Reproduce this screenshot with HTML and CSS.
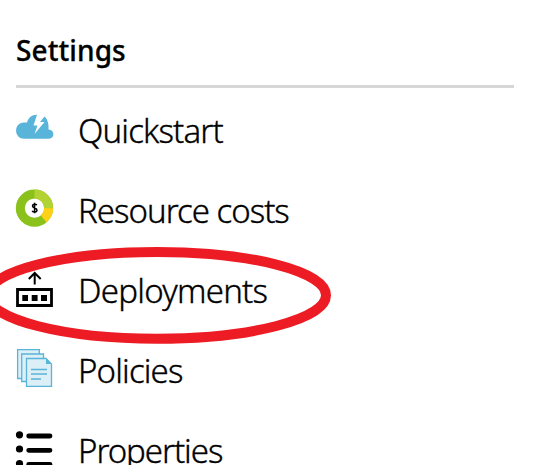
FILE: index.html
```html
<!DOCTYPE html>
<html lang="en">
<head>
<meta charset="utf-8">
<title>Settings</title>
<link rel="stylesheet" href="styles.css">
</head>
<body>
<nav class="menu">
  <h2 class="heading">Settings</h2>
  <ul class="list">
    <li class="item">
      <svg class="icon" viewBox="0 2 38 40"><path fill="#59b4d9" d="M8 30.700C-2.500 30.500-2.500 14.500 8 14.500H11C12.500 9.500 16 6.600 21 6.800L17.500 17.500H21.500L18.500 26L28.500 14H24L28.500 8.500C31.500 11 33 16 32.500 21.500C39 21.500 39 30.700 33 30.700Z"/></svg>
      <span class="label quickstart">Quickstart</span>
    </li>
    <li class="item">
      <svg class="icon" viewBox="0 1.700 38 40"><g fill="none" stroke-width="9"><circle cx="18.500" cy="19.800" r="14.200" stroke="#8ac11a"/><path d="M18.500 5.600A14.200 14.200 0 0 1 32.700 19.800" stroke="#b3d233"/><path d="M32.700 19.800A14.200 14.200 0 0 1 27.500 30.500" stroke="#fcd116"/></g><path d="M21 16.600C19.500 15.700 16.500 15.600 16.500 17.700C16.500 19.900 21 19.400 21 21.900C21 24.100 17.900 24.100 16 22.900M18.600 14.500V25" fill="none" stroke="#000" stroke-width="1.500"/></svg>
      <span class="label costs">Resource costs</span>
    </li>
    <li class="item">
      <svg class="icon" viewBox="0 0 38 40"><path d="M1.500 19.500H35.500V35.500H1.500Z" fill="none" stroke="#000" stroke-width="2.800"/><path d="M6.300 25H12V31H6.300ZM15.700 25H21.600V31H15.700ZM25 25H31V31H25Z"/><path d="M18.700 14.500V3M12.800 9L18.700 3L24.700 9" fill="none" stroke="#000" stroke-width="2"/></svg>
      <span class="label deployments">Deployments</span>
    </li>
    <li class="item">
      <svg class="icon" viewBox="0 0 38 40"><g fill="#dceff7" stroke="#59b4d9" stroke-width="1.300"><path d="M1.600 -.4H23.300V28.500H1.600Z"/><path d="M5.700 4H27.500V31.500H5.700Z"/><path d="M10.500 8.500H30L35.500 14V36.400H10.500Z"/></g><path d="M30 8.500V14H35.500Z" fill="#59b4d9"/><path d="M15 19.500H31M15 24H31M15 28.900H25" stroke="#59b4d9" stroke-width="1.500"/></svg>
      <span class="label policies">Policies</span>
    </li>
    <li class="item">
      <svg class="icon" viewBox="0 0 38 40"><path d="M12.700 6H34M12.700 20.300H34M12.700 34.500H34" stroke="#000" stroke-width="4.800" stroke-linecap="round"/><circle cx="3.500" cy="4.800" r="3.600"/><circle cx="3.500" cy="19" r="3.600"/><circle cx="3.500" cy="33.500" r="3.600"/></svg>
      <span class="label properties">Properties</span>
    </li>
  </ul>
</nav>
<svg class="marker" viewBox="0 0 545 465"><ellipse cx="157" cy="295.300" rx="169" ry="43.400"/></svg>
</body>
</html>
```
FILE: styles.css
```css
html, body {
  margin: 0;
  height: 465px;
  overflow: hidden;
  background: #fff;
}
body {
  position: relative;
  color: #000;
  font-family: "Noto Sans", "Open Sans", sans-serif;
}
.menu {
  padding: 30px 31px 0 16px;
}
.heading {
  margin: 0;
  height: 55px;
  border-bottom: 3px solid #d6d6d6;
  font-size: 28px;
  line-height: 40px;
  font-weight: 500;
  letter-spacing: 0.1px;
  -webkit-text-stroke: 0.3px #000;
}
.list {
  list-style: none;
  margin: 0;
  padding: 2px 0 0;
}
.item {
  display: flex;
  align-items: center;
  gap: 24px;
  height: 80px;
}
.icon {
  flex: none;
  width: 38px;
  height: 40px;
  overflow: visible;
}
.label {
  font-size: 33px;
  font-weight: 300;
  line-height: 44px;
  padding-top: 2px;
  letter-spacing: -0.85px;
  white-space: nowrap;
  -webkit-text-stroke: 0.35px #000;
}
.costs {
  letter-spacing: -1px;
}
.deployments {
  letter-spacing: -0.75px;
}
.properties {
  letter-spacing: -1.05px;
}
.marker {
  position: absolute;
  inset: 0;
  width: 545px;
  height: 465px;
  pointer-events: none;
}
.marker ellipse {
  fill: none;
  stroke: #ed1c24;
  stroke-width: 10px;
}
```
